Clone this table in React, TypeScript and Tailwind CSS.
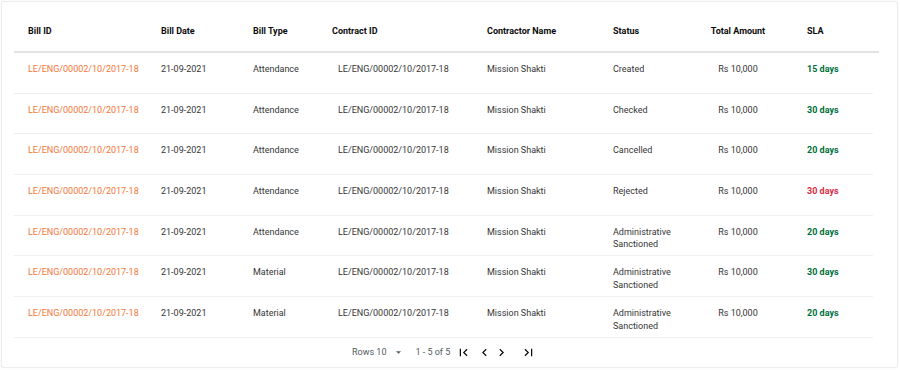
const COLS = "grid grid-cols-[147px_92px_79px_155px_126px_85px_80px_1fr]";

type Bill = {
  type: string;
  status: string;
  sla: string;
  late?: boolean;
};

const BILLS: Bill[] = [
  { type: "Attendance", status: "Created", sla: "15 days" },
  { type: "Attendance", status: "Checked", sla: "30 days" },
  { type: "Attendance", status: "Cancelled", sla: "20 days" },
  { type: "Attendance", status: "Rejected", sla: "30 days", late: true },
  { type: "Attendance", status: "Administrative Sanctioned", sla: "20 days" },
  { type: "Material", status: "Administrative Sanctioned", sla: "30 days" },
  { type: "Material", status: "Administrative Sanctioned", sla: "20 days" },
];

function PageIcon({ d }: { d: string }) {
  return (
    <svg viewBox="0 0 24 24" className="w-[15px] h-[15px] fill-[#0b0c0c]">
      <path d={d} />
    </svg>
  );
}

export default function App() {
  return (
    <div className="p-px bg-white font-['Roboto',sans-serif]">
      <div className="w-[897px] h-[367px] rounded-[3px] border border-[#ececec] bg-white shadow-[0_0_2px_rgba(0,0,0,0.06)]">

        {/* header */}
        <div className={`${COLS} ml-[12px] w-[865px] h-[51px] pt-[10px] items-center border-b-2 border-[#e3e3e3] text-[9px] font-bold text-[#0b0c0c]`}>
          <span className="pl-[14px]">Bill ID</span>
          <span>Bill Date</span>
          <span>Bill Type</span>
          <span>Contract ID</span>
          <span>Contractor Name</span>
          <span>Status</span>
          <span className="text-center">Total Amount</span>
          <span className="pl-[29px]">SLA</span>
        </div>

        {/* rows */}
        {BILLS.map((b, i) => (
          <div
            key={i}
            className={`${COLS} ml-[12px] w-[859px] h-[40.7px] pt-[10px] items-start border-b border-[#efefef] text-[9px] leading-[12.7px] text-[#363636]`}
          >
            <span className="pl-[14px] text-[#f47738]">LE/ENG/00002/10/2017-18</span>
            <span>21-09-2021</span>
            <span>{b.type}</span>
            <span className="pl-[6px]">LE/ENG/00002/10/2017-18</span>
            <span>Mission Shakti</span>
            <span className="pr-[12px]">{b.status}</span>
            <span className="text-center">Rs 10,000</span>
            <span className={`pl-[29px] font-bold ${b.late ? "text-[#dc2a45]" : "text-[#00703c]"}`}>{b.sla}</span>
          </div>
        ))}

        {/* pagination */}
        <div className="h-[29px] pl-[350px] flex items-center text-[9px] text-[#505a5f]">
          <span>Rows 10</span>
          <svg viewBox="0 0 10 5" className="ml-[10px] w-[5px] h-[3px] fill-[#505a5f]">
            <path d="M0 0h10L5 5z" />
          </svg>
          <span className="ml-[14px]">1 - 5 of 5</span>
          <div className="ml-[6px] flex items-center">
            <PageIcon d="M18.41 16.59 13.82 12l4.59-4.59L17 6l-6 6 6 6zM6 6h2v12H6z" />
            <span className="ml-[6px]">
              <PageIcon d="M15.41 7.41 14 6l-6 6 6 6 1.41-1.41L10.83 12z" />
            </span>
            <span className="ml-[2px]">
              <PageIcon d="M10 6 8.59 7.41 13.17 12l-4.58 4.59L10 18l6-6z" />
            </span>
            <span className="ml-[12px]">
              <PageIcon d="M5.59 7.41 10.18 12l-4.59 4.59L7 18l6-6-6-6zM16 6h2v12h-2z" />
            </span>
          </div>
        </div>
      </div>
    </div>
  );
}
